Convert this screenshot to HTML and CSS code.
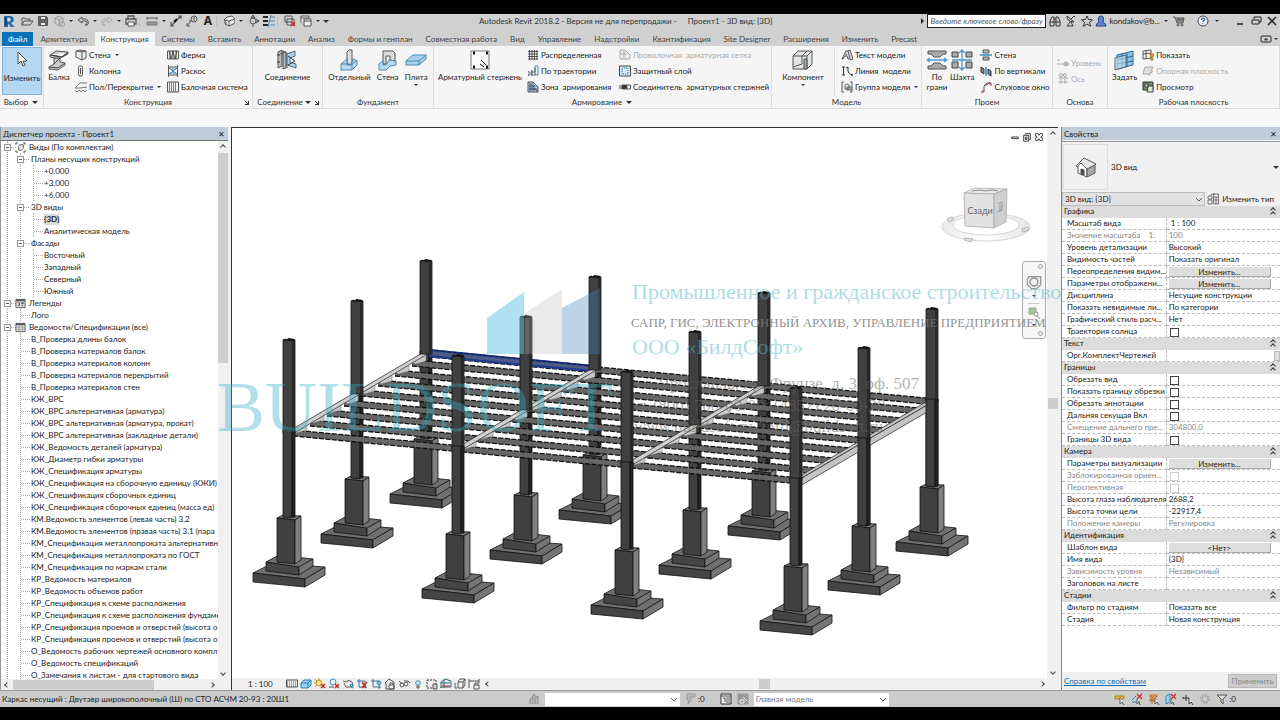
FILE: index.html
```html
<!DOCTYPE html>
<html lang="ru">
<head>
<meta charset="utf-8">
<title>Autodesk Revit 2018.2</title>
<link rel="stylesheet" href="styles.css">
</head>
<body>
<svg class="sprite" aria-hidden="true">
  <symbol id="open" viewBox="0 0 12 12"><path d="M1 10V3h3l1 1h4v2M1 10l2-4h9l-3 4z"/></symbol>
  <symbol id="save" viewBox="0 0 12 12"><path d="M1.500 1.500h8l1 1v8h-9z" fill="#666"/><path d="M3.500 1.500h5v3h-5zM3.500 7.500h5v3h-5z" fill="#eee"/></symbol>
  <symbol id="sync" viewBox="0 0 12 12"><g stroke="#999"><path d="M2 3l4-2 4 2v5l-4 3-4-3zM2 3l4 2 4-2M6 5v6"/><circle cx="9" cy="9" r="2.500"/></g></symbol>
  <symbol id="undo" viewBox="0 0 12 12"><path d="M5 2L1 5l4 3V6h3q2 0 2 2t-2 2h2q2-1 1-4-1-2-3-2H5z"/></symbol>
  <symbol id="redo" viewBox="0 0 12 12"><path stroke="#aaa" d="M7 2l4 3-4 3V6H4Q2 6 2 8t2 2H2Q0 9 1 6q1-2 3-2h3z"/></symbol>
  <symbol id="print" viewBox="0 0 12 12"><path d="M3 4V1h6v3M1 9V4h10v5z" stroke-width="1.300"/><path d="M3 7h6v4H3z" fill="#fff"/></symbol>
  <symbol id="measure" viewBox="0 0 12 12"><path d="M1 3h10M1 2v3M11 2v3"/><path d="M1 7h10v3H1z" fill="#999" stroke="#777"/></symbol>
  <symbol id="dim" viewBox="0 0 12 12"><path d="M1 11L11 1M1 7v4h3M8 1h3v3" stroke-width="1.200"/><path d="M4 7l3-3" stroke="#111" stroke-width="2"/></symbol>
  <symbol id="tag" viewBox="0 0 12 12"><circle cx="8" cy="4" r="3"/><path d="M8 2v4M1 11l4-5H3M1 8v3h3"/></symbol>
  <symbol id="house" viewBox="0 0 12 12"><path d="M1 5l3-3 5-1 3 3v4L6 11 2 9V5z" fill="#eee"/><path d="M1 5l5 1 6-2M6 6v5M3 7v2"/></symbol>
  <symbol id="section" viewBox="0 0 12 12"><circle cx="6" cy="6" r="3"/><path d="M6 0L4 3h4zM9 4l3 2-3 2M6 9v3" fill="#888"/></symbol>
  <symbol id="thin" viewBox="0 0 12 12"><path d="M0 2h5M0 6h5M0 10h5" stroke="#222" stroke-width="2"/><path d="M7 2h5M7 6h5M7 10h5M8 0L5 12" stroke="#5287b5"/></symbol>
  <symbol id="closewin" viewBox="0 0 12 12"><path d="M1 1h7v6H1zM3 4h7v6H3z"/><path d="M7 7l4 4M11 7l-4 4" stroke="#c22" stroke-width="1.500"/></symbol>
  <symbol id="windows" viewBox="0 0 12 12"><path d="M1 8V1h8v2M1 3h8M4 11V4h7v7zM4 6h7" fill="#eee"/></symbol>
  <symbol id="binoc" viewBox="0 0 12 12"><path d="M1 11V6l2-4h2v9zM7 11V2h2l2 4v5zM5 4h2M5 7h2M1 7h4M7 7h4" stroke="#333"/></symbol>
  <symbol id="dish" viewBox="0 0 12 12"><path d="M2 1q0 6 7 6L2 1zM6 4l3-3M5 7l-3 4h6L6 7M9 1l1 1" stroke="#333"/></symbol>
  <symbol id="star" viewBox="0 0 12 12"><path d="M6 1l1.500 3.500 4 .3-3 2.500 1 4L6 9l-3.500 2.300 1-4-3-2.500 4-.3z" stroke="#333"/></symbol>
  <symbol id="user" viewBox="0 0 12 12"><path d="M1 11q0-3 3-3.500Q2 1 6 1t2 6.500q3 .5 3 3.500z" fill="#5d86cf" stroke="#24477f"/></symbol>
  <symbol id="cart" viewBox="0 0 12 12"><path d="M0 2h2l2 6h6l1-5H3M5 3v5M7 3v5M9 3v5M3 5h8"/><circle cx="5" cy="10" r="1"/><circle cx="9" cy="10" r="1"/></symbol>
  <symbol id="help" viewBox="0 0 12 12"><circle cx="6" cy="6" r="5" fill="#f6f9fc" stroke="#345"/><path d="M4.500 5q0-2 1.700-2t1.500 1.500Q7.500 5.500 6 6v1M6 8.200v1" stroke="#1e5b96" stroke-width="1.200"/></symbol>
  <symbol id="cursor" viewBox="0 0 12 16"><path d="M2 1v12l3-3 2 5 2-1-2-4h4z" fill="#fff" stroke="#444"/></symbol>
  <symbol id="beam" viewBox="0 0 22 22"><path d="M2 6l6-4 12 1-6 5zM2 6v2l4 1v6l-5 3v2l9 1 7-5v-2l-5-1V9l8-4V3" fill="#ccc"/><path d="M2 6l12 2 6-5M1 18l9 1 7-5M6 9h6l-6 6" stroke="#444"/></symbol>
  <symbol id="wall" viewBox="0 0 12 12"><path d="M1 2l6 1v8L1 8zM1 2l3-1 7 1v7L7 11M7 3l4-1" fill="#eee"/></symbol>
  <symbol id="column" viewBox="0 0 12 12"><rect x="3.500" y="1" width="4" height="10" rx="1.500" fill="#eee"/><path d="M5.500 3v6"/></symbol>
  <symbol id="floor" viewBox="0 0 12 12"><path d="M0 7l5-5h7M0 7h5l7-1M0 9l2 2 2-2 2 2 2-2 2 2 2-2" stroke="#777"/></symbol>
  <symbol id="truss" viewBox="0 0 12 12"><path d="M.500 2h11v8H.500zM2 2l2 8 2-8 2 8 2-8M3 2v8M6 2v8M9 2v8" stroke="#333" stroke-width=".8"/></symbol>
  <symbol id="brace" viewBox="0 0 12 12"><path d="M1.500 0v12M10.500 0v12M2 2h8M2 10h8"/><path d="M2 3l8 6M10 3L2 9M3 4h6M3 8h6" stroke="#3686bd"/></symbol>
  <symbol id="system" viewBox="0 0 12 12"><path d="M.500 1h11v10H.500z"/><path d="M2.500 1v10M4.500 1v10M6.500 1v10M8.500 1v10" stroke="#338cc2"/></symbol>
  <symbol id="joint" viewBox="0 0 22 22"><path d="M2 3l4-2v16l-4 2zM7 2l3 1v16l-3 1zM4 5l5-2 2 2v14" fill="#bbb"/><path d="M11 5l8-3v5l-5 2v4l6 2v4l-9-3z" fill="#aed0e8" stroke="#476b87"/><path d="M12 7l7 5-7 4M1 6h3M1 13h3" stroke="#333"/></symbol>
  <symbol id="isolated" viewBox="0 0 22 22"><path d="M9 3l2-2h3v14l-3 1H9z" fill="#ddd"/><path d="M3 15l6-5v6h4l2-6 4 2v4l-5 5H3z" fill="#b7dcf2" stroke="#4c88a9"/><path d="M3 15h11v6M14 15l5-4" stroke="#4c88a9"/></symbol>
  <symbol id="stripf" viewBox="0 0 22 22"><path d="M6 2h10l2 2v8l-5-1v-4H9v8H6z" fill="#ddd"/><path d="M2 15l4-3v4h3l3-5 7 1v4l-6 1-4 4H2z" fill="#b7dcf2" stroke="#4c88a9"/></symbol>
  <symbol id="slab" viewBox="0 0 22 22"><path d="M1 12l7-6h13v4l-7 6H1z" fill="#a5d3ef" stroke="#4c88a9"/><path d="M1 12h13l7-6M14 12v4" stroke="#4c88a9"/></symbol>
  <symbol id="rebar" viewBox="0 0 22 22"><path d="M2 2h18v18H2z" fill="#fafafa" stroke="#777"/><path d="M4 4h2M17 4h2M4 18h2M17 18h2" stroke="#111" stroke-width="3"/><path d="M12 11l5 5M11 15l4 3" stroke="#111"/></symbol>
  <symbol id="grid" viewBox="0 0 12 12"><path d="M2.500 1v10M5 1v10M7.500 1v10M10 1v10M1 2.500h10M1 5h10M1 7.500h10M1 10h10" stroke="#333" stroke-width=".8"/></symbol>
  <symbol id="path" viewBox="0 0 12 12"><path d="M4 10h7V1H8v6H4zM1 10h1" stroke="#4786ad"/><path d="M2 6v5M5 5v6M8 3v7" stroke="#555"/></symbol>
  <symbol id="area" viewBox="0 0 12 12"><path d="M1 1h5l5 5v5H1z" fill="#a9c7db"/><path d="M3 2v8M5 2v8M7 4v6M2 5h6M2 8h8M7 7l4 4" stroke="#345" stroke-width=".8"/></symbol>
  <symbol id="fabric" viewBox="0 0 12 12"><path d="M1 1h5l5 5v4H1zM5 2v7M1 5h7" stroke="#aaa" fill="#eee"/></symbol>
  <symbol id="cover" viewBox="0 0 12 12"><path d="M.500 1h11v10H.500z" fill="#dcecf5" stroke="#444"/><path d="M3 3h6v6H3z" stroke="#268" stroke-dasharray="1 1"/></symbol>
  <symbol id="coupler" viewBox="0 0 12 12"><path d="M0 5h3M0 7h3M8 4h3.500v4H8" /><path d="M3 4h5v4H3z" fill="#333"/></symbol>
  <symbol id="component" viewBox="0 0 22 22"><path d="M1 7l5-5h14v13l-5 5H1z" fill="#e1e3e5"/><path d="M1 7h14v13M15 7l5-5M10 7v8l-9 3M10 7l5-5" /><path d="M12 10h3v10h-3z" fill="#9ca8ad"/></symbol>
  <symbol id="mtext" viewBox="0 0 12 12"><path d="M1 10L5 2h2l2 8H7L6 7H4l-2 3zM5 5v1h1M7 2l2-1 3 9-3 1" fill="#ddd" stroke="#333" stroke-width=".8"/></symbol>
  <symbol id="mline" viewBox="0 0 12 12"><path d="M1 2h3M2.500 2v8M1 10h3M7 2q-1 8 5 8M5 3l2-1M11 9v2" stroke="#333"/></symbol>
  <symbol id="mgroup" viewBox="0 0 12 12"><path d="M3 1H1v10h2M9 1h2v10H9M4 4l2-1 2 1v4H4zM6 6h4v3H6z"/></symbol>
  <symbol id="byface" viewBox="0 0 22 22"><path d="M2 2h18v3h-3l-3 3H8L5 5H2zM2 20h18v-3h-3l-3-3H8l-3 3H2z" fill="#aaa"/><path d="M1 11h20M4 9l-3 2 3 2M18 9l3 2-3 2" stroke="#4b9bcc" stroke-width="1.300"/></symbol>
  <symbol id="shaft" viewBox="0 0 22 22"><path d="M1 3h6v5H1zM15 3h6v5h-6zM1 13h6v6H1zM15 13h6v6h-6z" fill="#aaa" stroke="#444"/><path d="M11 1v20M8 4l3-3 3 3M8 18l3 3 3-3M1 11h20" stroke="#4b9bcc" stroke-width="1.300"/></symbol>
  <symbol id="wallopen" viewBox="0 0 12 12"><path d="M3 1h6v3H3zM3 8h6v3H3z" fill="#bbb"/><path d="M0 6h12" stroke="#3488bd" stroke-width="1.500"/></symbol>
  <symbol id="vertopen" viewBox="0 0 12 12"><path d="M1 2l3 2v5L1 7zM8 4l3 2v5L8 9z" fill="#888" stroke="#333"/><path d="M6 2v9" stroke="#3488bd" stroke-width="1.500"/></symbol>
  <symbol id="dormer" viewBox="0 0 12 12"><path d="M1 11h3V5L10 2M4 5l3-3h4v3" /><path d="M3 9v2M10 1v3" stroke="#c44"/></symbol>
  <symbol id="level" viewBox="0 0 12 12"><path d="M0 3h3M0 7h12M9 5v4" stroke="#aaa"/><circle cx="9" cy="7" r="2" stroke="#aaa" fill="#bbb"/></symbol>
  <symbol id="axes" viewBox="0 0 12 12"><path d="M4 3v8M8 3v8M1 5h10M1 9h10" stroke="#aaa"/><circle cx="4" cy="2" r="1.500" stroke="#aaa"/><circle cx="8" cy="2" r="1.500" stroke="#aaa"/></symbol>
  <symbol id="setplane" viewBox="0 0 22 22"><path d="M3 6l16-4v14L3 20z" fill="#8fc3e6" stroke="#2b6c98"/><path d="M8 5v14M13 4v14M3 11l16-4M3 15l16-3" stroke="#2b6c98"/><path d="M1 9l11-3v12L1 21z" fill="#d5ebf8" fill-opacity=".5" stroke="#567"/></symbol>
  <symbol id="show" viewBox="0 0 12 12"><path d="M1 2l8-1v8l-8 1zM4 2v8M1 5l8-1" /><path d="M8 5h4l-1 3h-2zM9 9h2v2H9z" fill="#e8b54d" stroke="#a77523"/></symbol>
  <symbol id="refplane" viewBox="0 0 12 12"><path d="M3 2h8L8 9H1zM6 11l5-5" stroke="#aaa" fill="#ddd"/></symbol>
  <symbol id="viewer" viewBox="0 0 12 12"><path d="M1 1h10v8H1z" fill="#6e8c72" stroke="#333"/><path d="M3 3h3v3H3zM6 5h5v6H5z" fill="#d9e3cf" stroke="#444"/></symbol>
  <symbol id="views" viewBox="0 0 12 12"><path d="M3 1H1v2M9 1h2v2M3 11H1V9M9 11h2V9" stroke="#333"/><path d="M4 5l1-2h4v4L7 9H4z" fill="#eee"/></symbol>
  <symbol id="legend" viewBox="0 0 12 12"><path d="M1 1.500h10v9H1z" fill="#ddd"/><path d="M1 2.500h10" stroke-width="2"/><path d="M3 5h2v3H3M7 5h2v1H7M7 8h2"/></symbol>
  <symbol id="sched" viewBox="0 0 12 12"><path d="M1 1.500h10v9H1z" fill="#eee"/><path d="M1 2.500h10" stroke-width="2"/><path d="M1 5.500h10M1 8h10M4.500 3v7M8 3v7" stroke="#999"/></symbol>
  <symbol id="typeedit" viewBox="0 0 12 12"><path d="M1 3h4v3H1zM1 7h4v4H1zM6.500 1h5v10h-5zM7 4h4M7 7h4M9 4v7M3 3l2-2h3" stroke-width=".8"/></symbol>
  <symbol id="raster" viewBox="0 0 12 12"><path d="M.500 2h11v7H.500z"/><path d="M1 4h10M1 6h10M1 8h10" stroke-dasharray="1 1"/></symbol>
  <symbol id="cube" viewBox="0 0 12 12"><path d="M1 5l3-3h7v5l-3 3H1zM1 5h7v5M8 5l3-3" fill="#9dd0ef" stroke="#2f80ad"/></symbol>
  <symbol id="sunx" viewBox="0 0 12 12"><circle cx="5" cy="5" r="3" fill="#ffe18a" stroke="#cc9820"/><path d="M5 0v2M0 5h2M1 1l2 2M1 9l2-2" stroke="#cc9820"/><path d="M7 6l4 4M11 6l-4 4" stroke="#b43420" stroke-width="1.500"/></symbol>
  <symbol id="shadowx" viewBox="0 0 12 12"><circle cx="5" cy="4" r="3" stroke="#4a86b0" fill="#e7f2fa"/><path d="M1 9h5"/><path d="M7 6l4 4M11 6l-4 4" stroke="#b43420" stroke-width="1.500"/></symbol>
  <symbol id="teapot" viewBox="0 0 12 12"><path d="M1 3l3 1q3-3 6 0 2 4-1 5H4L2 5M6 2v1"/><path d="M8 6l3 1v3L9 9z" stroke="#3888b7"/></symbol>
  <symbol id="cropx" viewBox="0 0 12 12"><path d="M3 1v8h8M1 3h8v5" stroke="#36729c"/><path d="M6 4l4 6M11 4l-5 6" stroke="#b43420" stroke-width="1.500"/></symbol>
  <symbol id="crop" viewBox="0 0 12 12"><path d="M3 1v8h8M1 3h8v8" stroke="#36729c"/><circle cx="9" cy="5" r="2" stroke="#3888b7"/></symbol>
  <symbol id="lock" viewBox="0 0 12 12"><path d="M1 5l4-4 5 3v7H2V5zM5 7h5v4H5zM6 7V5h3v2" fill="#eee"/></symbol>
  <symbol id="glasses" viewBox="0 0 12 12"><path d="M1 3l3 3M6 3h4l2 2"/><circle cx="4" cy="7" r="2"/><circle cx="8" cy="6" r="2"/></symbol>
  <symbol id="bulb" viewBox="0 0 12 12"><circle cx="6" cy="5" r="2.300" fill="#d7f0fa" stroke="#3888b7"/><path d="M5 8h2v2H5z"/></symbol>
  <symbol id="marquee" viewBox="0 0 12 12"><path d="M1 2h9v8H1z" stroke-dasharray="2 1" stroke="#333"/><path d="M7 6h4v5H7z" fill="#ccc"/></symbol>
  <symbol id="analyt" viewBox="0 0 12 12"><path d="M1 10V4l4-3 6 2v6H1zM1 5h9M4 2v8" stroke="#367"/><path d="M2 8h8" stroke="#b43420"/></symbol>
  <symbol id="disp" viewBox="0 0 12 12"><path d="M4 4l2-3h5v6l-2 3H4zM4 4h5v6M9 4l2-3M1 5v5h2"/></symbol>
  <symbol id="constr" viewBox="0 0 12 12"><path d="M1 1v9M11 1v4M1 3h10M6 7h5v4H6zM7 7V5h3v2"/></symbol>
  <symbol id="worker" viewBox="0 0 12 12"><path d="M2 11V6l3-2v7M7 11V5l3-2v8M4 4l2-3 2 3" stroke="#888" fill="#bbb"/></symbol>
  <symbol id="funnel" viewBox="0 0 12 12"><path d="M1 2h10L7 6v5L5 9V6z" fill="#ddd"/></symbol>
  <symbol id="reqs" viewBox="0 0 12 12"><path d="M2 1h8v3H5v2h2L3 11l1-4H2z" fill="#bbb" stroke="#999"/></symbol>
  <symbol id="listbox" viewBox="0 0 12 12"><path d="M1 1h10v10H1z" stroke="#333" fill="#eee"/><path d="M1 3h10M3 5h2v4M6 5h4M6 7h4M6 9h4" stroke="#333" stroke-width=".8"/></symbol>
  <symbol id="optadd" viewBox="0 0 12 12"><path d="M1 1h10v10H1z" fill="#999" stroke="#999"/><path d="M3 7v3h4V7zM6 4l4 4" stroke="#eee"/></symbol>
  <symbol id="sellink" viewBox="0 0 12 12"><path d="M1 3h9v3H1z" fill="#e9bd3b" stroke="#ab7f13"/><path d="M6 4v7l2-2 2 3" fill="#fff"/></symbol>
  <symbol id="selund" viewBox="0 0 12 12"><path d="M1 9h8M1 7l4-4" stroke="#3582b5"/><path d="M6 1l5 5M11 1L6 6" stroke="#c33" stroke-width="1.400"/><path d="M6 6v5l2-2 1 3" fill="#fff"/></symbol>
  <symbol id="selpin" viewBox="0 0 12 12"><path d="M2 2h7v2H2zM2 6h5v2H2zM4 4v7" fill="#e5a45d" stroke="#b76d22"/><path d="M7 5v6l2-2 2 3" fill="#fff"/></symbol>
  <symbol id="selface" viewBox="0 0 12 12"><path d="M1 3l4-2v8l-4 2z" fill="#9dd0ef" stroke="#3582b5"/><path d="M6 1l5 5M11 1L6 6" stroke="#c33" stroke-width="1.400"/><path d="M6 6v5l2-2 1 3" fill="#fff"/></symbol>
  <symbol id="drag" viewBox="0 0 12 12"><path d="M1 5h6M4 2v6M1 4v2M7 5v6l2-2 2 3" stroke="#333" fill="#fff"/></symbol>
  <symbol id="gear" viewBox="0 0 12 12"><circle cx="6" cy="6" r="4" stroke="#aaa" stroke-width="2" stroke-dasharray="2 1"/><circle cx="6" cy="6" r="3" stroke="#aaa"/></symbol>
  <symbol id="wheel" viewBox="0 0 12 12"><path d="M2 2h9v6L8 11H4L1 8V4z" stroke="#999" fill="#eee"/><circle cx="6" cy="6" r="3" stroke="#888"/></symbol>
  <symbol id="zoomreg" viewBox="0 0 12 12"><path d="M1 1h7v6H1z" fill="#a9c39b" stroke="#91a986"/><circle cx="8" cy="7" r="2" fill="#fff" stroke="#888"/><path d="M9 9l3 3" stroke="#888"/></symbol>
</svg>

<div class="app">
  <header class="titlebar">
    <svg class="logo" viewBox="0 0 12 14" aria-label="Revit"><path d="M1 1h6q4 0 4 4 0 3-3 3.500L12 13H8L5 9v4H1z" fill="#2468a8"/><path d="M4 3h3q2 2 0 4H4z" fill="#cfe0ef"/><path d="M1 1v12l3-3V3z" fill="#134b83"/></svg>
    <nav class="quick">
      <button><svg class="ic"><use href="#open"/></svg></button><button><svg class="ic"><use href="#save"/></svg></button><button><svg class="ic"><use href="#sync"/></svg></button><i class="caret"></i><button><svg class="ic"><use href="#undo"/></svg></button><i class="caret"></i><button><svg class="ic"><use href="#redo"/></svg></button><i class="caret"></i><button><svg class="ic"><use href="#print"/></svg></button><i class="sep"></i><button><svg class="ic"><use href="#measure"/></svg></button><i class="caret"></i><button><svg class="ic"><use href="#dim"/></svg></button><button><svg class="ic"><use href="#tag"/></svg></button><button class="letter">A</button><i class="sep"></i><button><svg class="ic"><use href="#house"/></svg></button><i class="caret"></i><button><svg class="ic"><use href="#section"/></svg></button><button><svg class="ic"><use href="#thin"/></svg></button><i class="sep"></i><button><svg class="ic"><use href="#closewin"/></svg></button><button><svg class="ic"><use href="#windows"/></svg></button><i class="caret"></i><i class="caret big"></i>
    </nav>
    <div class="title"><span>Autodesk Revit 2018.2 - Версия не для перепродажи -</span><span>Проект1 - 3D вид: {3D}</span></div>
    <div class="account">
      <i class="tri"></i>
      <input class="search" type="text" aria-label="Поиск" placeholder="Введите ключевое слово/фразу">
      <button><svg class="ic"><use href="#binoc"/></svg></button><button><svg class="ic"><use href="#dish"/></svg></button><button><svg class="ic"><use href="#star"/></svg></button><button class="login"><svg class="ic"><use href="#user"/></svg>kondakov@b...</button><i class="caret"></i><button class="shop"><svg class="ic"><use href="#cart"/></svg></button><button><svg class="ic"><use href="#help"/></svg></button><i class="caret"></i>
    </div>
    <div class="winbtns"><button aria-label="Свернуть"><svg class="ic" viewBox="0 0 12 12"><path d="M3 9h6" stroke="#222" stroke-width="1.500"/></svg></button><button aria-label="Восстановить"><svg class="ic" viewBox="0 0 12 12"><path d="M4 4V2h7v5H9M2 5h7v4H2z" stroke="#222"/></svg></button><button aria-label="Закрыть"><svg class="ic" viewBox="0 0 12 12"><path d="M2 2l8 8M10 2l-8 8" stroke="#222" stroke-width="1.500"/></svg></button></div>
  </header>

  <nav class="tabs">
    <button class="file">Файл</button><button>Архитектура</button><button class="on">Конструкция</button><button>Системы</button><button>Вставить</button><button>Аннотации</button><button>Анализ</button><button>Формы и генплан</button><button>Совместная работа</button><button>Вид</button><button>Управление</button><button>Надстройки</button><button>Квантификация</button><button>Site Designer</button><button>Расширения</button><button>Изменить</button><button>Precast</button>
    <span class="ribbonmode"><svg class="ic" viewBox="0 0 12 12"><rect x="1" y="3" width="10" height="6" rx="1" stroke="#222"/><path d="M4.500 7L6 5l1.500 2z" fill="#222"/></svg><i class="caret"></i></span>
  </nav>

  <section class="ribbon">
    <div class="group g-sel"><div class="tools"><button class="large active"><svg class="ic"><use href="#cursor"/></svg>Изменить</button></div><div class="gname">Выбор <i class="caret big"></i></div></div>
    <div class="group g-str"><div class="tools">
      <button class="large"><svg class="ic"><use href="#beam"/></svg>Балка</button>
      <div class="stack wide"><button><svg class="ic"><use href="#wall"/></svg>Стена<i class="caret"></i></button><button><svg class="ic"><use href="#column"/></svg>Колонна</button><button><svg class="ic"><use href="#floor"/></svg>Пол/Перекрытие<i class="caret"></i></button></div>
      <div class="stack"><button><svg class="ic"><use href="#truss"/></svg>Ферма</button><button><svg class="ic"><use href="#brace"/></svg>Раскос</button><button><svg class="ic"><use href="#system"/></svg>Балочная система</button></div>
    </div><div class="gname">Конструкция<i class="launch"></i></div></div>
    <div class="group g-con"><div class="tools center"><button class="large"><svg class="ic"><use href="#joint"/></svg>Соединение</button></div><div class="gname has-launch">Соединение <i class="caret big"></i><i class="launch"></i></div></div>
    <div class="group g-fnd"><div class="tools center spread"><button class="large"><svg class="ic"><use href="#isolated"/></svg>Отдельный</button><button class="large"><svg class="ic"><use href="#stripf"/></svg>Стена</button><button class="large"><svg class="ic"><use href="#slab"/></svg>Плита<i class="caret"></i></button></div><div class="gname">Фундамент</div></div>
    <div class="group g-reb"><div class="tools">
      <button class="large"><svg class="ic"><use href="#rebar"/></svg>Арматурный стержень</button>
      <div class="stack mid"><button><svg class="ic"><use href="#grid"/></svg>Распределенная</button><button><svg class="ic"><use href="#path"/></svg>По траектории</button><button><svg class="ic"><use href="#area"/></svg>Зона&nbsp; армирования</button></div>
      <div class="stack"><button disabled><svg class="ic"><use href="#fabric"/></svg>Проволочная&nbsp; арматурная сетка</button><button><svg class="ic"><use href="#cover"/></svg>Защитный слой</button><button><svg class="ic"><use href="#coupler"/></svg>Соединитель&nbsp; арматурных стержней</button></div>
    </div><div class="gname">Армирование <i class="caret big"></i></div></div>
    <div class="group g-mod"><div class="tools">
      <button class="large comp"><svg class="ic"><use href="#component"/></svg>Компонент<i class="caret"></i></button>
      <div class="stack ruled"><button><svg class="ic"><use href="#mtext"/></svg>Текст модели</button><button><svg class="ic"><use href="#mline"/></svg>Линия&nbsp; модели</button><button><svg class="ic"><use href="#mgroup"/></svg>Группа модели<i class="caret"></i></button></div>
    </div><div class="gname">Модель</div></div>
    <div class="group g-opn"><div class="tools">
      <button class="large"><svg class="ic"><use href="#byface"/></svg>По<br>грани</button><button class="large"><svg class="ic"><use href="#shaft"/></svg>Шахта</button>
      <div class="stack"><button><svg class="ic"><use href="#wallopen"/></svg>Стена</button><button><svg class="ic"><use href="#vertopen"/></svg>По вертикали</button><button><svg class="ic"><use href="#dormer"/></svg>Слуховое окно</button></div>
    </div><div class="gname">Проем</div></div>
    <div class="group g-dat"><div class="tools"><div class="stack vmid"><button disabled><svg class="ic"><use href="#level"/></svg>Уровень</button><button disabled><svg class="ic"><use href="#axes"/></svg>Ось</button></div></div><div class="gname">Основа</div></div>
    <div class="group g-wp"><div class="tools">
      <button class="large"><svg class="ic"><use href="#setplane"/></svg>Задать</button>
      <div class="stack"><button><svg class="ic"><use href="#show"/></svg>Показать</button><button disabled><svg class="ic"><use href="#refplane"/></svg>Опорная плоскость</button><button><svg class="ic"><use href="#viewer"/></svg>Просмотр</button></div>
    </div><div class="gname">Рабочая плоскость</div></div>
  </section>
  <div class="options"></div>

  <main class="work">
    <aside class="browser">
      <h2 class="phead">Диспетчер проекта - Проект1<button aria-label="Закрыть">✕</button></h2>
      <div class="treebox">
        <div class="treeview">
          <ul class="tree">
            <li><div class="row"><i class="tog"></i><svg class="ic"><use href="#views"/></svg>Виды (По комплектам)</div>
              <ul>
                <li><div class="row"><i class="tog"></i>Планы несущих конструкций</div><ul><li>+0.000</li><li>+3.000</li><li>+6.000</li></ul></li>
                <li><div class="row"><i class="tog"></i>3D виды</div><ul><li><b>{3D}</b></li><li>Аналитическая модель</li></ul></li>
                <li><div class="row"><i class="tog"></i>Фасады</div><ul><li>Восточный</li><li>Западный</li><li>Северный</li><li>Южный</li></ul></li>
              </ul></li>
            <li><div class="row"><i class="tog"></i><svg class="ic"><use href="#legend"/></svg>Легенды</div><ul><li>Лого</li></ul></li>
            <li><div class="row"><i class="tog"></i><svg class="ic"><use href="#sched"/></svg>Ведомости/Спецификации (все)</div>
              <ul>
                <li>В_Проверка длины балок</li><li>В_Проверка материалов балок</li><li>В_Проверка материалов колонн</li><li>В_Проверка материалов перекрытий</li><li>В_Проверка материалов стен</li>
                <li>КЖ_ВРС</li><li>КЖ_ВРС альтернативная (арматура)</li><li>КЖ_ВРС альтернативная (арматура, прокат)</li><li>КЖ_ВРС альтернативная (закладные детали)</li><li>КЖ_Ведомость деталей (арматура)</li><li>КЖ_Диаметр гибки арматуры</li><li>КЖ_Спецификация арматуры</li><li>КЖ_Спецификация на сборочную единицу (КЖИ)</li><li>КЖ_Спецификация сборочных единиц</li><li>КЖ_Спецификация сборочных единиц (масса ед)</li>
                <li>КМ.Ведомость элементов (левая часть) 3.2</li><li>КМ.Ведомость элементов (правая часть) 3.1 (пара</li><li>КМ_Спецификация металлопроката альтернативна</li><li>КМ_Спецификация металлопроката по ГОСТ</li><li>КМ_Спецификация по маркам стали</li>
                <li>КР_Ведомость материалов</li><li>КР_Ведомость объемов работ</li><li>КР_Спецификация к схеме расположения</li><li>КР_Спецификация к схеме расположения фундаме</li><li>КР_Спецификация проемов и отверстий (высота о</li><li>КР_Спецификация проемов и отверстий (высота о</li>
                <li>О_Ведомость рабочих чертежей основного компл</li><li>О_Ведомость спецификаций</li><li>О_Замечания к листам - для стартового вида</li>
              </ul></li>
          </ul>
        </div>
        <div class="vscroll"><i class="chev up"></i><i class="thumb"></i><i class="chev down"></i></div>
      </div>
      <div class="hscroll"><i class="chev left"></i><i class="thumb"></i><i class="chev right"></i></div>
    </aside>

    <section class="viewport">
      <div class="canvasrow">
        <div class="canvas">
          <svg class="model" viewBox="232 128 815 550" role="img" aria-label="3D вид каркаса">
            <defs>
              <g id="foot" stroke="#111" stroke-width=".8" stroke-linejoin="round">
                <path d="M253 573l20-10 52 4-20 12z" fill="#6f6f6f"/><path d="M253 573l52 6v8l-52-5z" fill="#454545"/><path d="M305 579l20-12v8l-20 12z" fill="#757575"/>
                <path d="M266 562l13-7 34 4-14 9z" fill="#6f6f6f"/><path d="M266 562l33 5v8l-33-4z" fill="#454545"/><path d="M299 567l14-8v7l-14 9z" fill="#757575"/>
                <path d="M277 518l6-3 18 1-6 4z" fill="#777"/><path d="M277 518l18 2v44l-18-2z" fill="#404040"/><path d="M295 520l6-4v44l-6 4z" fill="#808080"/>
              </g>
              <g id="low" stroke="#111"><path d="M283 430h9v88l-9-1z" fill="#404040" stroke-width=".8"/><path d="M292 430h3v87h-3z" fill="#242424" stroke-width=".8"/></g>
              <g id="top"><path d="M283 340h12v93h-12z" fill="#404040" stroke="#111" stroke-width=".8"/><path d="M292 340h3v93h-3z" fill="#292929"/><path d="M282.500 340l3-1.500 1 1 2-1.500 6 1v2z" fill="#111"/></g>
              <g id="bay"><path d="M0 0l169 16v6L0 6z" fill="#666"/><path d="M0 0l169 16M0 6l169 16" stroke="#111" stroke-width="1.300" stroke-dasharray="5 1.500"/></g>
              <g id="run"><use href="#bay"/><use href="#bay" x="169" y="16"/><use href="#bay" x="338" y="32"/></g>
              <path id="plate" d="M1 1L15-8V1L4 4z" fill="#c9c9c9" stroke="#777" stroke-width=".5"/>
              <g id="girder">
                <use href="#plate"/><use href="#plate" x="17" y="-10"/><use href="#plate" x="34" y="-20"/><use href="#plate" x="51" y="-29"/><use href="#plate" x="68" y="-39"/><use href="#plate" x="85" y="-49"/><use href="#plate" x="102" y="-59"/><use href="#plate" x="119" y="-69"/>
                <path d="M-1 1l133-78 5 1L4 3z" fill="#d0d0d0" stroke="#333" stroke-width=".8"/>
              </g>
              <linearGradient id="ring"><stop offset="0" stop-color="#e9e9e9"/><stop offset=".5" stop-color="#fff"/><stop offset="1" stop-color="#e4e4e4"/></linearGradient>
            </defs>
            <use href="#foot" x="137" y="-79"/><use href="#foot" x="306" y="-63"/><use href="#foot" x="475" y="-47"/><use href="#foot" x="643" y="-31"/>
            <use href="#low" x="137" y="-79"/><use href="#low" x="306" y="-63"/><use href="#low" x="475" y="-47"/><use href="#low" x="643" y="-31"/>
            <use href="#foot" x="68" y="-39"/><use href="#foot" x="237" y="-23"/><use href="#foot" x="406" y="-8"/><use href="#foot" x="575" y="8"/>
            <use href="#low" x="68" y="-39"/><use href="#low" x="237" y="-23"/><use href="#low" x="406" y="-8"/><use href="#low" x="575" y="8"/>
            <use href="#foot"/><use href="#foot" x="169" y="16"/><use href="#foot" x="338" y="32"/><use href="#foot" x="507" y="48"/>
            <use href="#run" x="429" y="351"/>
            <path d="M429 349l164 16v7l-164-15z" fill="#4d5c82"/><path d="M429 350l164 16M429 356l164 15" stroke="#1c3a92" stroke-width="2"/><path d="M429 350l164 16" stroke="#101c44" stroke-dasharray="4 2"/>
            <use href="#run" x="412" y="360"/><use href="#run" x="395" y="370"/><use href="#run" x="378" y="380"/><use href="#run" x="361" y="390"/><use href="#run" x="344" y="400"/><use href="#run" x="327" y="410"/><use href="#run" x="310" y="420"/><use href="#run" x="293" y="430"/>
            <use href="#girder" x="292" y="429"/><use href="#girder" x="461" y="445"/><use href="#girder" x="630" y="461"/>
            <path d="M800 476l131-77 3 2v7l-134 78z" fill="#c4c4c4" stroke="#333" stroke-width=".8"/><path d="M800 479l134-78" stroke="#333"/>
            <use href="#top" x="137" y="-79"/><use href="#top" x="306" y="-63"/><use href="#top" x="475" y="-47"/><use href="#top" x="643" y="-31"/><use href="#low" x="643" y="-31"/>
            <use href="#top" x="68" y="-39"/><use href="#top" x="237" y="-23"/><use href="#top" x="406" y="-8"/><use href="#top" x="575" y="8"/><use href="#low" x="575" y="8"/>
            <use href="#top"/><use href="#low"/><use href="#top" x="169" y="16"/><use href="#low" x="169" y="16"/><use href="#top" x="338" y="32"/><use href="#low" x="338" y="32"/><use href="#top" x="507" y="48"/><use href="#low" x="507" y="48"/>
            <g stroke="#aaa" stroke-width=".8">
              <path fill-rule="evenodd" fill="url(#ring)" stroke="#ccc" d="M942 227a44 14 0 1 0 88 0a44 14 0 1 0-88 0M953 225a33 10 0 1 0 66 0a33 10 0 1 0-66 0"/>
              <path d="M947 219l5-2 2 3-5 2zM1022 229l6-2 1 3-6 2zM965 238l8 1-2 3-7-2z" fill="#ddd"/>
              <path d="M964 193l11-5 32 1-13 5z" fill="#ececec"/><path d="M964 193l30 1v34l-29-2z" fill="#e2e2e2"/><path d="M994 194l13-5-1 33-12 6z" fill="#cfcfcf"/>
            </g>
            <path d="M972 191l8-1 5 1 8-1 5 1" stroke="#888"/><path d="M998 204l4-2v8l-4 2M1000 205v6" stroke="#999"/>
            <text class="face" x="980" y="214" text-anchor="middle">Сзади</text>
          </svg>
          <div class="mdi"><button aria-label="Свернуть"><svg class="ic" viewBox="0 0 12 12"><path d="M2 6h8v2H2z" stroke="#222"/></svg></button><button aria-label="Восстановить"><svg class="ic" viewBox="0 0 12 12"><path d="M4 3V2h6v7H8M2 4h6v7H2zM4 6h2v3H4z" stroke="#222"/></svg></button><button aria-label="Закрыть"><svg class="ic" viewBox="0 0 12 12"><path d="M2 2h3l1 2 1-2h3v3L8 6l2 1v3H7L6 8l-1 2H2V7l2-1-2-1z" stroke="#222"/></svg></button></div>
          <div class="navbar"><i class="dot"></i><button aria-label="Штурвал"><svg class="ic"><use href="#wheel"/></svg></button><i class="caret"></i><button class="zoomb" aria-label="Масштаб"><svg class="ic"><use href="#zoomreg"/></svg></button><i class="caret"></i><i class="dot"></i></div>
        </div>
        <div class="vscroll"><i class="chev up"></i><i class="thumb"></i><i class="chev down"></i></div>
      </div>
      <div class="viewbar">
        <button class="scale">1 : 100</button>
        <svg class="ic"><use href="#raster"/></svg><svg class="ic"><use href="#cube"/></svg><svg class="ic"><use href="#sunx"/></svg><svg class="ic"><use href="#shadowx"/></svg><svg class="ic"><use href="#teapot"/></svg><svg class="ic"><use href="#cropx"/></svg><svg class="ic"><use href="#crop"/></svg><svg class="ic"><use href="#lock"/></svg><svg class="ic"><use href="#glasses"/></svg><svg class="ic"><use href="#bulb"/></svg><svg class="ic"><use href="#marquee"/></svg><svg class="ic"><use href="#analyt"/></svg><svg class="ic"><use href="#disp"/></svg><svg class="ic"><use href="#constr"/></svg>
        <div class="hscroll"><i class="chev left"></i><i class="thumb"></i><i class="chev right"></i></div>
      </div>
    </section>

    <aside class="props">
      <h2 class="phead">Свойства<button aria-label="Закрыть">✕</button></h2>
      <div class="type"><div class="thumbimg"><svg class="ic" viewBox="0 0 24 24"><path d="M2 11l8-8 12 6-7 7z" fill="#e5e5e5"/><path d="M4 11v7l9 4v-8l-6-6z" fill="#fff"/><path d="M13 14v8l8-4v-8z" fill="#aaa"/><path d="M7 14v5l3 1v-5z" fill="#444"/></svg></div><span>3D вид</span><i class="caret big"></i></div>
      <div class="picker"><select aria-label="Вид"><option>3D вид: {3D}</option></select><svg class="arrow" viewBox="0 0 8 8"><path d="M1 3l3 3 3-3"/></svg><button><svg class="ic"><use href="#typeedit"/></svg>Изменить тип</button></div>
      <div class="sheet">
        <table>
          <colgroup><col class="names"><col></colgroup>
          <tr class="cat"><th colspan="2">Графика<i></i></th></tr>
          <tr><td>Масштаб вида</td><td>&nbsp;1 : 100</td></tr>
          <tr class="dim"><td>Значение масштаба &nbsp; &nbsp;1:</td><td>100</td></tr>
          <tr><td>Уровень детализации</td><td>Высокий</td></tr>
          <tr><td>Видимость частей</td><td>Показать оригинал</td></tr>
          <tr><td>Переопределения видим...</td><td><button>Изменить...</button></td></tr>
          <tr><td>Параметры отображени...</td><td><button>Изменить...</button></td></tr>
          <tr><td>Дисциплина</td><td>Несущие конструкции</td></tr>
          <tr><td>Показать невидимые ли...</td><td>По категории</td></tr>
          <tr><td>Графический стиль расч...</td><td>Нет</td></tr>
          <tr><td><label for="c1">Траектория солнца</label></td><td><input type="checkbox" id="c1"></td></tr>
          <tr class="cat"><th colspan="2">Текст<i></i></th></tr>
          <tr><td>Орг.КомплектЧертежей</td><td><button class="more" aria-label="Обзор"></button></td></tr>
          <tr class="cat"><th colspan="2">Границы<i></i></th></tr>
          <tr><td><label for="c2">Обрезать вид</label></td><td><input type="checkbox" id="c2"></td></tr>
          <tr><td><label for="c3">Показать границу обрезки</label></td><td><input type="checkbox" id="c3"></td></tr>
          <tr><td><label for="c4">Обрезать аннотации</label></td><td><input type="checkbox" id="c4"></td></tr>
          <tr><td><label for="c5">Дальняя секущая Вкл</label></td><td><input type="checkbox" id="c5"></td></tr>
          <tr class="dim"><td>Смещение дальнего пре...</td><td>304800,0</td></tr>
          <tr><td><label for="c6">Границы 3D вида</label></td><td><input type="checkbox" id="c6"></td></tr>
          <tr class="cat"><th colspan="2">Камера<i></i></th></tr>
          <tr><td>Параметры визуализации</td><td><button>Изменить...</button></td></tr>
          <tr class="dim"><td><label for="c7">Заблокированная ориен...</label></td><td><input type="checkbox" id="c7" disabled></td></tr>
          <tr class="dim"><td><label for="c8">Перспективная</label></td><td><input type="checkbox" id="c8" disabled></td></tr>
          <tr><td>Высота глаза наблюдателя</td><td>2688,2</td></tr>
          <tr><td>Высота точки цели</td><td>-22917,4</td></tr>
          <tr class="dim"><td>Положение камеры</td><td>Регулировка</td></tr>
          <tr class="cat"><th colspan="2">Идентификация<i></i></th></tr>
          <tr><td>Шаблон вида</td><td><button>&lt;Нет&gt;</button></td></tr>
          <tr><td>Имя вида</td><td>{3D}</td></tr>
          <tr class="dim"><td>Зависимость уровня</td><td>Независимый</td></tr>
          <tr><td>Заголовок на листе</td><td></td></tr>
          <tr class="cat"><th colspan="2">Стадии<i></i></th></tr>
          <tr><td>Фильтр по стадиям</td><td>Показать все</td></tr>
          <tr><td>Стадия</td><td>Новая конструкция</td></tr>
        </table>
      </div>
      <div class="pfoot"><a href="#">Справка по свойствам</a><button disabled>Применить</button></div>
    </aside>

    <svg class="watermark" viewBox="0 127 1280 563" aria-hidden="true">
      <path d="M487 318l37-26v62h-37z" fill="#5fc4e4" opacity=".5"/><path d="M525 313l37-24v65h-37z" fill="#bbb" opacity=".3"/><path d="M562 308l38-20v66h-38z" fill="#3e80bc" opacity=".35"/>
      <text class="w-big" x="217" y="431">BUILDSOFT</text>
      <text class="w-blue" x="632" y="299">Промышленное и гражданское строительство</text>
      <text class="w-caps" x="631" y="327">САПР, ГИС, ЭЛЕКТРОННЫЙ АРХИВ, УПРАВЛЕНИЕ ПРЕДПРИЯТИЕМ</text>
      <text class="w-blue" x="632" y="354">ООО «БилдСофт»</text>
      <g class="w-gray"><text x="919" y="389" text-anchor="end">г. Ярославль, пр. Фрунзе, д. 3, оф. 507</text><text x="638" y="411">т. (800) 700-00-00; (4852) 20-00-20</text><text x="634" y="432">www.buildsoft.ru, info@buildsoft.ru</text></g>
    </svg>
  </main>

  <footer class="status">
    <span class="hint">Каркас несущий : Двутавр широкополочный (Ш) по СТО АСЧМ 20-93 : 20Ш1</span>
    <svg class="ic"><use href="#worker"/></svg>
    <span class="combo"><select aria-label="Рабочий набор"><option></option></select><svg class="arrow" viewBox="0 0 8 8"><path d="M1 3l3 3 3-3"/></svg></span>
    <span class="cnt"><svg class="ic"><use href="#reqs"/></svg>:0</span>
    <svg class="ic"><use href="#listbox"/></svg><svg class="ic"><use href="#optadd"/></svg>
    <span class="combo"><select aria-label="Вариант"><option>Главная модель</option></select><svg class="arrow" viewBox="0 0 8 8"><path d="M1 3l3 3 3-3"/></svg></span>
    <div class="selops"><svg class="ic"><use href="#sellink"/></svg><svg class="ic"><use href="#selund"/></svg><svg class="ic"><use href="#selpin"/></svg><svg class="ic"><use href="#selface"/></svg><svg class="ic"><use href="#drag"/></svg><svg class="ic"><use href="#gear"/></svg><span class="cnt"><svg class="ic"><use href="#funnel"/></svg>:0</span></div>
  </footer>
</div>
</body>
</html>
```

FILE: styles.css
```css
* { box-sizing: border-box; }
body { margin: 0; background: #000; color: #222; font: 8px/12px Lato, "Open Sans", sans-serif; }
button, input, select { font: inherit; color: inherit; margin: 0; }
button { background: none; border: 0; padding: 0; white-space: nowrap; }
svg { fill: none; }
.sprite { position: absolute; width: 0; height: 0; }
.ic { width: 12px; height: 12px; flex: none; stroke: #555; stroke-width: 1; display: block; }

.app { height: 100vh; padding: 14px 0 13px; display: flex; flex-direction: column; }
.caret { width: 8px; flex: none; display: inline-flex; justify-content: center; align-items: center; }
.caret::before { content: ""; border: 2px solid transparent; border-top-color: #333; border-bottom: 0; }
.caret.big::before { border-width: 3px; border-bottom: 0; }

/* title bar */
.titlebar { height: 17px; flex: none; display: flex; align-items: center; background: #d0d0d0; padding-bottom: 3px; }
.logo { width: 12px; height: 13px; margin: 0 4px 0 3px; }
.quick, .account, .winbtns { display: flex; align-items: center; }
.quick button, .account button, .winbtns button { width: 16px; display: flex; justify-content: center; align-items: center; }
.quick .letter { font: bold 12px/12px "Noto Sans", sans-serif; }
.sep { width: 5px; height: 9px; border-left: 1px solid #bbb; }
.title { flex: 1; display: flex; justify-content: center; gap: 11px; white-space: nowrap; color: #333; }
.tri { border: 3px solid transparent; border-left-color: #222; border-right: 0; margin-right: 3px; }
.search { width: 119px; height: 14px; margin-right: 1px; border: 1px solid #222; background: #fff; padding: 0 2px; font-style: italic; }
.search::placeholder { color: #555; opacity: 1; }
.account .login { width: auto; gap: 2px; }
.account .caret { width: 11px; }
.account .shop { margin-right: 8px; }
.winbtns { padding-left: 10px; }

/* tabs */
.tabs { height: 15px; flex: none; display: flex; align-items: stretch; gap: 1px; background: #d0d0d0; padding: 1px 0 0 2px; }
.tabs button { padding: 0 6px; color: #444; }
.tabs .file { background: #0b72b5; color: #fff; }
.tabs .on { background: #f5f5f5; }
.ribbonmode { margin-left: auto; display: flex; align-items: center; }

/* ribbon */
.ribbon { height: 63px; flex: none; display: grid; grid-template-columns: 44fr 209fr 70fr 111fr 338fr 150fr 131fr 55fr 172fr; background: #f5f5f5; border-bottom: 1px solid #dcdcdc; }
.group { min-width: 0; display: flex; flex-direction: column; border-right: 1px solid #dcdcdc; padding-top: 1px; }
.tools { flex: 1; display: flex; padding-left: 4px; }
.tools.center { justify-content: center; padding: 0; }
.tools.spread { gap: 6px; }
.gname { height: 14px; display: flex; justify-content: center; align-items: center; position: relative; color: #333; gap: 3px; }
.has-launch { padding-right: 6px; gap: 1px; }
.launch { position: absolute; right: 3px; bottom: 4px; width: 4px; height: 4px; border: solid #333; border-width: 0 1px 1px 0; background: linear-gradient(45deg, transparent 40%, #333 40% 60%, transparent 60%); }
.large { display: flex; flex-direction: column; align-items: center; padding-top: 2px; line-height: 10px; }
.large .ic { width: 22px; height: 22px; margin-bottom: 1px; }
.large.active { flex: 1; margin: 0 1px 0 0; background: #b5d7f2; border: 1px solid #7eb4de; padding-top: 3px; }
.large.active .ic { height: 16px; margin-bottom: 6px; }
.large .caret { height: 6px; }
.g-sel .tools { padding-left: 2px; }
.stack { display: flex; flex-direction: column; padding-left: 5px; }
.stack button { display: flex; align-items: center; height: 16px; gap: 2px; }
.stack button:disabled { color: #aaa; }
.stack.wide { width: 92px; }
.stack.mid { width: 92px; }
.stack.vmid { justify-content: center; padding: 0; }
.comp { width: 54px; }
.ruled { margin-left: 4px; border-left: 1px solid #dcdcdc; height: 48px; padding-left: 6px; }
.g-opn .tools { padding-left: 3px; }
.g-opn .large { margin: 0 1px; }
.options { height: 18px; flex: none; background: #f7f7f7; }

/* work area */
.work { flex: 1; min-height: 0; display: grid; grid-template-columns: 228px minmax(0, 1fr) 219px; column-gap: 3px; background: #f0f0f0; position: relative; }
.phead { margin: 0; height: 13px; flex: none; display: flex; justify-content: space-between; align-items: center; padding: 0 3px 0 2px; background: #bfcddb; font-size: 8px; font-weight: normal; line-height: 12px; }
.browser, .props, .viewport { display: flex; flex-direction: column; min-width: 0; min-height: 0; }
.browser { border-left: 1px solid #999; }
.treebox { flex: 1; min-height: 0; display: flex; border-top: 1px solid #777; background: #fff; }
.treeview { flex: 1; min-width: 0; overflow: hidden; white-space: nowrap; }
.tree, .tree ul { list-style: none; margin: 0; padding: 0; }
.tree { margin-left: 6px; border-left: 1px dotted #aaa; }
.tree ul { margin-left: 12px; border-left: 1px dotted #aaa; }
.tree li { line-height: 12px; }
.row { display: flex; align-items: center; height: 12px; margin-left: -4px; }
.tog { width: 7px; height: 7px; flex: none; border: 1px solid #999; background: linear-gradient(#555, #555) center / 3px 1px no-repeat #fff; }
.tog::after { content: ""; display: block; width: 5px; border-top: 1px dotted #aaa; margin: 2px 0 0 6px; }
.row .ic { width: 11px; height: 11px; margin: 0 3px 0 4px; }
.tree ul .row .tog { margin-right: 7px; }
.tree ul li:not(:has(.row))::before { content: ""; display: inline-block; width: 9px; margin-right: 1px; border-top: 1px dotted #aaa; vertical-align: middle; }
.tree b { background: #dcdcdc; display: inline-block; line-height: 11px; }
.vscroll { width: 11px; flex: none; background: #f0f0f0; display: flex; flex-direction: column; align-items: center; justify-content: space-between; }
.treebox .vscroll { width: 10px; }
.hscroll { height: 11px; display: flex; align-items: center; justify-content: space-between; background: #f0f0f0; }
.chev { width: 4px; height: 4px; margin: 4px; border: solid #444; border-width: 1px 0 0 1px; flex: none; }
.up { transform: rotate(45deg); }
.down { transform: rotate(225deg); }
.left { transform: rotate(-45deg); }
.right { transform: rotate(135deg); }
.thumb { background: #cdcdcd; }
.treebox .thumb { width: 10px; height: 39%; margin-bottom: auto; }
.browser .hscroll .thumb { width: 65%; height: 10px; margin-right: auto; }
.browser .hscroll { padding-right: 10px; }

.viewport { border: solid #333; border-width: 1px 0 0 1px; }
.canvasrow { flex: 1; min-height: 0; display: flex; }
.canvas { flex: 1; min-width: 0; position: relative; background: #fff; }
.model { width: 100%; height: 100%; display: block; }
.face { font: 9px Lato, sans-serif; fill: #666; }
.mdi { position: absolute; top: 4px; right: 2px; display: flex; }
.mdi .ic { width: 10px; height: 10px; margin: 0 1px; }
.navbar { position: absolute; top: 133px; right: 1px; width: 24px; height: 78px; border: 1px solid #aaa; border-radius: 3px; background: rgba(245, 245, 245, .8); display: flex; flex-direction: column; align-items: center; justify-content: space-between; padding: 2px; }
.navbar .ic { width: 16px; height: 16px; }
.zoomb { border-top: 1px solid #ccc; padding-top: 3px; }
.navbar .zoomb .ic { width: 12px; height: 12px; }
.dot { width: 5px; height: 5px; border: 1px solid #999; border-radius: 50%; align-self: flex-end; }
.canvasrow .thumb { width: 10px; height: 11px; }
.viewbar { flex: none; display: flex; align-items: center; height: 12px; gap: 2px; background: #f0f0f0; }
.scale { margin: 0 11px 0 16px; }
.viewbar .hscroll { flex: 1; padding-right: 10px; }
.viewbar .thumb { width: 11px; height: 10px; }

/* properties */
.props { background: #f0f0f0; border-left: 1px solid #888; }
.type { height: 51px; flex: none; display: flex; align-items: center; border: 1px solid #999; border-width: 1px 0 0; margin-top: 1px; }
.thumbimg { width: 45px; align-self: stretch; margin: 2px 3px 2px 1px; border: 1px solid #ddd; display: flex; align-items: center; justify-content: center; }
.thumbimg .ic { width: 24px; height: 24px; }
.type .caret { margin-left: auto; }
.picker { height: 14px; flex: none; display: flex; align-items: center; position: relative; }
.picker select { width: 143px; height: 14px; appearance: none; border: 1px solid #bbb; background: #e2e2e2; padding: 0 2px; border-radius: 0; }
.arrow { width: 8px; height: 8px; stroke: #555; margin-left: -10px; flex: none; pointer-events: none; }
.picker button { display: flex; gap: 3px; margin-left: auto; padding-right: 6px; }
.sheet { flex: 1; min-height: 0; overflow: hidden; background: #fff; }
table { width: 100%; border-spacing: 0; table-layout: fixed; }
.names { width: 48%; }
td, th { height: 12px; padding: 0; line-height: 11px; border-bottom: 1px dashed #bbb; white-space: nowrap; overflow: hidden; vertical-align: top; text-align: left; }
td:first-child { padding-left: 5px; border-right: 1px dashed #bbb; }
td + td { padding-left: 2px; }
th { background: #dcdcdc; font-weight: normal; padding: 0 5px 0 2px; border-bottom-color: #dcdcdc; }
th i { float: right; width: 4px; height: 9px; padding-top: 2px; }
th i::before, th i::after { content: ""; display: block; width: 3px; height: 3px; border: solid #333; border-width: 1px 0 0 1px; transform: rotate(45deg); }
.dim td { color: #888; }
td button { display: block; width: 92%; height: 10px; margin-top: 1px; line-height: 8px; background: #dedede; border: 1px solid #aaa; border-width: 0 1px 1px 0; text-align: center; }
td .more { width: 6px; margin-left: auto; border: 1px solid #bbb; }
td input { appearance: none; display: block; width: 9px; height: 9px; margin: 2px 0 0 1px; border: 1px solid #444; background: #fff; }
td input:disabled { border-color: #ccc; }
.pfoot { height: 18px; flex: none; display: flex; justify-content: space-between; align-items: center; padding: 0 3px 0 2px; }
.pfoot a { color: #0a6bb8; }
.pfoot button { width: 49px; height: 14px; background: #ccc; border: 1px solid #bbb; color: #888; }

.watermark { position: absolute; inset: 0; width: 100%; height: 100%; pointer-events: none; }
.watermark text { font-family: "Liberation Serif", serif; }
.w-big { font-size: 72px; fill: #38afc6; opacity: .38; }
.w-blue { font-size: 22px; fill: #5bbccc; opacity: .5; }
.w-caps { font-size: 13px; fill: #777; opacity: .8; }
.w-gray { font-size: 17px; fill: #666; opacity: .5; }

/* status bar */
.status { height: 17px; flex: none; display: flex; align-items: center; background: #cbcbcb; border-top: 1px solid #999; gap: 5px; padding-left: 2px; }
.hint { flex: 0 0 521px; }
.combo { display: flex; align-items: center; width: 135px; }
.combo select { width: 135px; height: 13px; flex: none; appearance: none; border: 0; border-radius: 0; background: #fff; color: #777; padding: 0 2px; }
.cnt { display: flex; align-items: center; gap: 1px; margin-right: 10px; }
.selops { margin-left: auto; display: flex; gap: 5px; align-items: center; padding-right: 34px; }
```
